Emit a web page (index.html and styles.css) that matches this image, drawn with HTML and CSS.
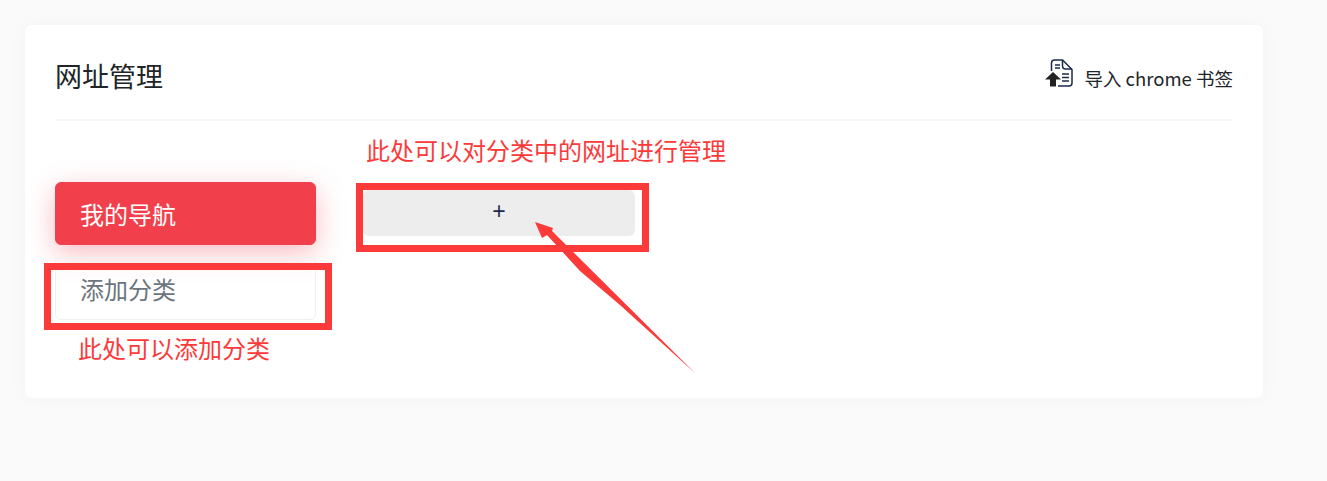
FILE: index.html
```html
<!DOCTYPE html>
<html lang="zh-CN">
    <head>
        <meta charset="UTF-8">
        <title>网址管理</title>
        <link rel="stylesheet" href="styles.css">
    </head>
    <body>
        <div class="card">
            <div class="card-header">
                <h4 class="card-title">网址管理</h4>
                <a class="import-link" href="#">
                    <svg class="import-icon" width="30" height="30" viewBox="0 0 30 30">
                        <path d="M7.500 12V4a3 3 0 0 1 3-3H18.500L28 10.500V24a3 3 0 0 1-3 3H14" fill="none" stroke="#1d2a4d" stroke-width="1.500"/>
                        <path d="M18.500 1V7a3 3 0 0 0 3 3H28" fill="none" stroke="#1d2a4d" stroke-width="1.500"/>
                        <path d="M11 6h5M11 9h5M18 15h7M18 18.500h7M18 22h7" fill="none" stroke="#1d2a4d" stroke-width="1.300"/>
                        <path d="M9 13L17 20.500H12V27.500H6V20.500H1Z" fill="#222"/>
                    </svg>
                    <span class="import-text">导入 chrome 书签</span>
                </a>
            </div>
            <div class="card-body">
                <div class="nav-list">
                    <div class="nav-item active">我的导航</div>
                    <div class="nav-item">添加分类</div>
                </div>
                <div class="url-list">
                    <button class="add-url">+</button>
                </div>
            </div>
            <div class="mark mark-left"></div>
            <div class="mark mark-right"></div>
            <div class="mark-text text-left">此处可以添加分类</div>
            <div class="mark-text text-right">此处可以对分类中的网址进行管理</div>
            <svg class="arrow" width="180" height="170" viewBox="0 0 180 170">
                <path d="M10 2L28 8L27 11L171 154L95 85L55 51L22 15L17 18Z" fill="#fc3a3a"/>
            </svg>
        </div>
    </body>
</html>
```

FILE: styles.css
```css
* {
    box-sizing: border-box;
    margin: 0;
    padding: 0;
}
body {
    height: 481px;
    padding: 25px 64px 0 25px;
    background: #fafafa;
    font-family: "Noto Sans CJK SC", "Liberation Sans", sans-serif;
    color: #212529;
    overflow: hidden;
}
.card {
    position: relative;
    height: 373px;
    padding: 0 30px;
    background: #fff;
    border-radius: 6px;
    box-shadow: 0 0 20px rgba(0, 0, 0, 0.03);
}
.card-header {
    display: flex;
    justify-content: space-between;
    align-items: center;
    height: 96px;
    padding-top: 7px;
    border-bottom: 2px solid #f8f8f8;
}
.card-title {
    font-size: 27px;
    font-weight: 400;
    color: #212529;
}
.import-link {
    display: flex;
    align-items: flex-end;
    gap: 10px;
    color: #212529;
    font-size: 18.5px;
    text-decoration: none;
}
.import-icon {
    display: block;
    margin-bottom: 3px;
}
.import-text {
    margin-bottom: 1px;
}
.card-body {
    display: flex;
    gap: 47px;
    padding-top: 61px;
}
.nav-list {
    display: flex;
    flex-direction: column;
    gap: 12px;
    width: 261px;
}
.nav-item {
    height: 63px;
    padding-left: 24px;
    border: 1px solid #f0f0f0;
    border-radius: 6px;
    font-size: 24px;
    line-height: 61px;
    color: #6c757d;
}
.nav-item.active {
    border-color: #f1404b;
    background: #f1404b;
    color: #fff;
    box-shadow: 0 8px 28px rgba(241, 64, 75, 0.35);
}
.url-list {
    width: 272px;
    padding-top: 8px;
}
.add-url {
    display: block;
    width: 100%;
    height: 46px;
    padding-bottom: 4px;
    border: none;
    border-radius: 6px;
    background: #ededed;
    color: #1d2a4d;
    font-family: "Liberation Sans", sans-serif;
    font-size: 23px;
}
.mark {
    position: absolute;
    border: 7px solid #fc3a3a;
}
.mark-left {
    left: 19px;
    top: 238px;
    width: 288px;
    height: 67px;
}
.mark-right {
    left: 331px;
    top: 158px;
    width: 293px;
    height: 69px;
}
.mark-text {
    position: absolute;
    color: #fc3a3a;
    font-size: 24px;
    white-space: nowrap;
}
.text-left {
    left: 53px;
    top: 305px;
}
.text-right {
    left: 341px;
    top: 107px;
}
.arrow {
    position: absolute;
    left: 500px;
    top: 195px;
}
```
